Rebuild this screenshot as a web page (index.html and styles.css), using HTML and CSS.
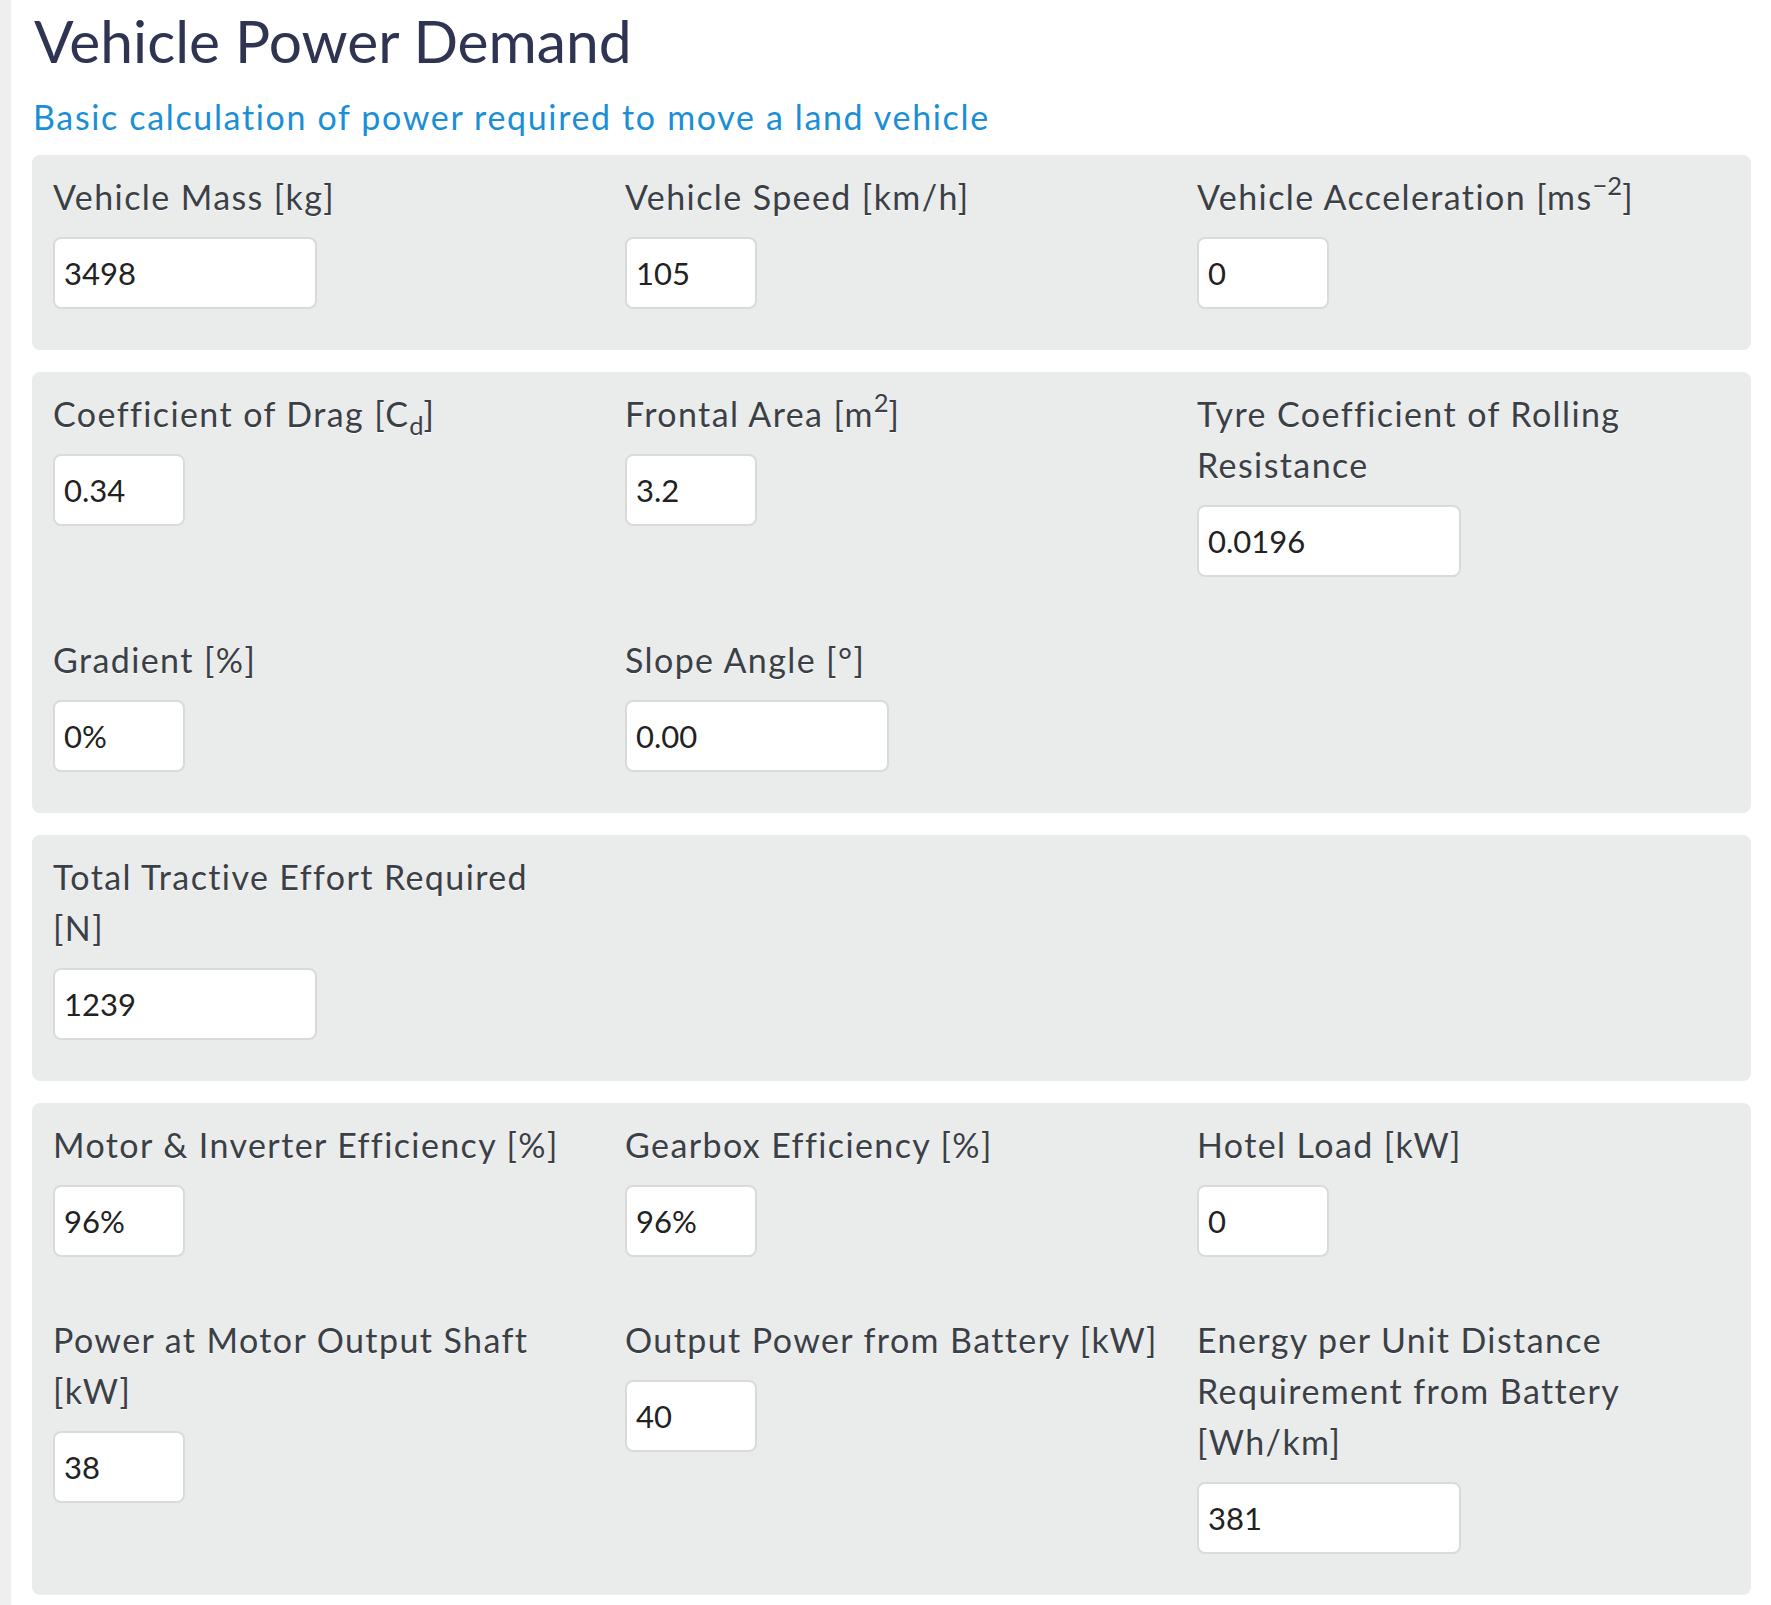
FILE: index.html
```html
<!DOCTYPE html>
<html lang="en">
<head>
  <meta charset="UTF-8" />
  <meta name="viewport" content="width=device-width, initial-scale=1.0"/>
  <title>Vehicle Power Demand</title>
  <link rel="stylesheet" href="styles.css">
</head>
<body>
  <div class="page">
    <div class="edge"></div>
    <div class="main">
      <h1>Vehicle Power Demand</h1>
      <p class="lead">Basic calculation of power required to move a land vehicle</p>

      <div class="well">
        <div class="field">
          <label for="mass">Vehicle Mass [kg]</label>
          <input type="text" id="mass" class="wide" value="3498"/>
        </div>
        <div class="field">
          <label for="speed">Vehicle Speed [km/h]</label>
          <input type="text" id="speed" class="narrow" value="105"/>
        </div>
        <div class="field">
          <label for="accel">Vehicle Acceleration [ms<sup>&minus;2</sup>]</label>
          <input type="text" id="accel" class="narrow" value="0"/>
        </div>
      </div>

      <div class="well">
        <div class="field">
          <label for="cd">Coefficient of Drag [C<sub>d</sub>]</label>
          <input type="text" id="cd" class="narrow" value="0.34"/>
        </div>
        <div class="field">
          <label for="area">Frontal Area [m<sup>2</sup>]</label>
          <input type="text" id="area" class="narrow" value="3.2"/>
        </div>
        <div class="field">
          <label for="crr">Tyre Coefficient of Rolling Resistance</label>
          <input type="text" id="crr" class="wide" value="0.0196"/>
        </div>
        <div class="field">
          <label for="gradient">Gradient [%]</label>
          <input type="text" id="gradient" class="narrow" value="0%"/>
        </div>
        <div class="field">
          <label for="slope">Slope Angle [&deg;]</label>
          <input type="text" id="slope" class="wide" value="0.00"/>
        </div>
      </div>

      <div class="well">
        <div class="field">
          <label for="effort">Total Tractive Effort Required<br/>[N]</label>
          <input type="text" id="effort" class="wide" value="1239"/>
        </div>
      </div>

      <div class="well">
        <div class="field">
          <label for="motor-eff">Motor &amp; Inverter Efficiency [%]</label>
          <input type="text" id="motor-eff" class="narrow" value="96%"/>
        </div>
        <div class="field">
          <label for="gear-eff">Gearbox Efficiency [%]</label>
          <input type="text" id="gear-eff" class="narrow" value="96%"/>
        </div>
        <div class="field">
          <label for="hotel">Hotel Load [kW]</label>
          <input type="text" id="hotel" class="narrow" value="0"/>
        </div>
        <div class="field">
          <label for="shaft">Power at Motor Output Shaft [kW]</label>
          <input type="text" id="shaft" class="narrow" value="38"/>
        </div>
        <div class="field">
          <label for="battery">Output Power from Battery [kW]</label>
          <input type="text" id="battery" class="narrow" value="40"/>
        </div>
        <div class="field">
          <label for="energy">Energy per Unit Distance Requirement from Battery [Wh/km]</label>
          <input type="text" id="energy" class="wide" value="381"/>
        </div>
      </div>
    </div>
  </div>
</body>
</html>
```
FILE: styles.css
```css
body {
  margin: 0;
  background: #fff;
  font-family: Lato, "Open Sans", sans-serif;
  color: #3b4046;
}
.page {
  display: flex;
  min-height: 100vh;
}
.edge {
  width: 11px;
  flex-shrink: 0;
  background: #efefef;
}
.main {
  flex: 1;
  padding: 9px 20px 11px 21px;
}
h1 {
  margin: 0 0 0 2px;
  font-size: 58.7px;
  font-weight: 400;
  line-height: 64px;
  color: #2e3452;
}
.lead {
  margin: 18px 0 13px 1px;
  font-size: 34px;
  line-height: 51px;
  letter-spacing: 1.65px;
  color: #1a8fd6;
}
.well {
  display: grid;
  grid-template-columns: 548px 548px 1fr;
  column-gap: 24px;
  row-gap: 57px;
  align-items: start;
  background: #eaecec;
  border-radius: 8px;
  padding: 16px 21px 41px;
  margin-bottom: 22px;
}
.field label {
  display: block;
  font-size: 34px;
  line-height: 51px;
  letter-spacing: 1.4px;
  color: #3b4046;
  text-shadow: 0 1px 0 rgba(255, 255, 255, 0.8);
  margin-bottom: 15px;
}
sup, sub {
  font-size: 75%;
  line-height: 0;
  position: relative;
  vertical-align: baseline;
  letter-spacing: 0;
}
sup {
  top: -0.6em;
}
sub {
  bottom: -0.3em;
}
input {
  display: block;
  box-sizing: border-box;
  height: 72px;
  padding: 0 9px;
  border: 2px solid #d9dada;
  border-radius: 8px;
  background: #fff;
  font-family: Lato, "Open Sans", sans-serif;
  font-size: 31px;
  color: #222;
}
input.narrow {
  width: 132px;
}
input.wide {
  width: 264px;
}
```
